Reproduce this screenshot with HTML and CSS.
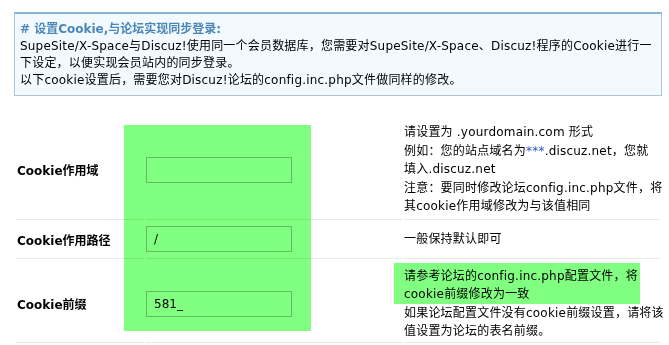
FILE: index.html
```html
<!DOCTYPE html>
<html lang="zh-CN">
<head>
<meta charset="utf-8">
<title>Cookie 设置</title>
<link rel="stylesheet" href="styles.css">
</head>
<body>
<div class="page">
  <div class="notice">
    <h3 class="notice-title"># 设置Cookie,与论坛实现同步登录:</h3>
    <p class="notice-text">SupeSite/X-Space与Discuz!使用同一个会员数据库，您需要对SupeSite/X-Space、Discuz!程序的Cookie进行一<br>下设定，以便实现会员站内的同步登录。<br>以下cookie设置后，需要您对Discuz!论坛的config.inc.php文件做同样的修改。</p>
  </div>

  <div class="form">
    <div class="cell label">Cookie作用域</div>
    <div class="cell field"><input class="text" type="text" value=""></div>
    <div class="cell desc"><p class="desc-text">请设置为 .yourdomain.com 形式<br>例如：您的站点域名为<span class="stars">***</span>.discuz.net，您就<br>填入.discuz.net<br>注意：要同时修改论坛config.inc.php文件，将<br>其cookie作用域修改为与该值相同</p></div>

    <div class="cell label">Cookie作用路径</div>
    <div class="cell field"><input class="text" type="text" value="/"></div>
    <div class="cell desc"><p class="desc-text">一般保持默认即可</p></div>

    <div class="cell label row3">Cookie前缀</div>
    <div class="cell field row3"><input class="text" type="text" value="581_"></div>
    <div class="cell desc row3"><p class="desc-text">请参考论坛的config.inc.php配置文件，将<br>cookie前缀修改为一致<br>如果论坛配置文件没有cookie前缀设置，请将该<br>值设置为论坛的表名前缀。</p></div>

    <div class="mark mark-fields"></div>
    <div class="mark mark-prefix"></div>
  </div>
</div>
</body>
</html>
```

FILE: styles.css
```css
html, body {
  margin: 0;
  padding: 0;
  background: #ffffff;
}

body {
  font-family: "DejaVu Sans", "Noto Sans CJK SC", sans-serif;
  font-size: 12px;
  color: #000000;
  overflow: hidden;
}

.page {
  padding: 12px 7px 0 14px;
}

.notice {
  background: #f3faff;
  border: 1px solid #abc8db;
  border-top: 2px solid #86b6d6;
  padding: 7px 5px 6px 5px;
  white-space: nowrap;
}

.notice-title {
  margin: 0;
  font-size: 12px;
  font-weight: bold;
  line-height: 17px;
  color: #4a86b8;
}

.notice-text {
  margin: 0;
  line-height: 17px;
  letter-spacing: 0.2px;
}

.form {
  position: relative;
  margin: 24px 2px 0 2px;
  display: grid;
  grid-template-columns: 128px 256px 256px;
  grid-template-rows: 100px 39px 84px;
  column-gap: 2px;
}

.cell {
  display: flex;
  align-items: center;
  border-bottom: 1px solid #e8e8e8;
  box-sizing: border-box;
}

.cell.row3 {
  padding-top: 6px;
}

.label {
  font-weight: bold;
  padding-left: 1px;
}

.desc-text {
  margin: 0;
  line-height: 18.4px;
  letter-spacing: 0.2px;
  white-space: nowrap;
}

.stars {
  color: #3355cc;
}

.text {
  box-sizing: border-box;
  width: 146px;
  height: 26px;
  margin: 0;
  padding: 0 7px;
  border: 1px solid #bdbdbd;
  background: #ffffff;
  font-family: "DejaVu Sans", sans-serif;
  font-size: 12px;
  color: #000000;
  outline: none;
}

.mark {
  position: absolute;
  background: #80ff80;
  mix-blend-mode: multiply;
  pointer-events: none;
}

.mark-fields {
  left: 108px;
  top: 5px;
  width: 187px;
  height: 206px;
}

.mark-prefix {
  left: 378px;
  top: 143px;
  width: 246px;
  height: 41px;
}
```
